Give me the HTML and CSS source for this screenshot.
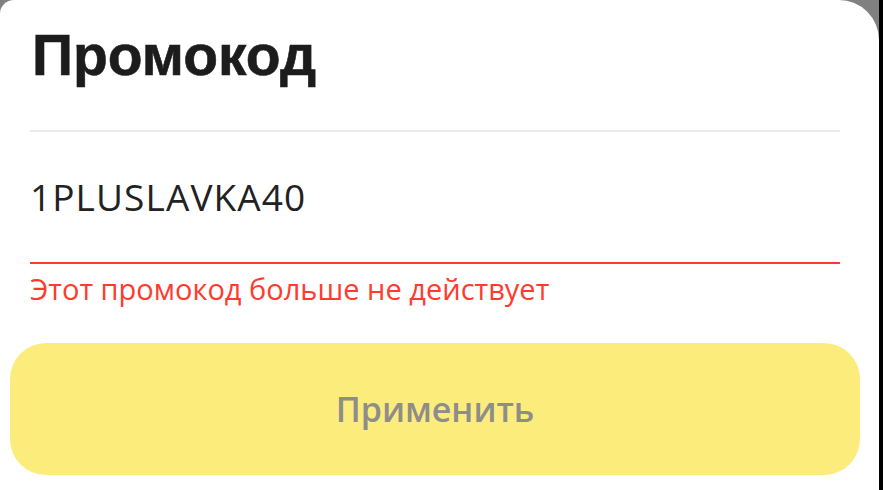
FILE: index.html
```html
<!DOCTYPE html>
<html lang="ru">
<head>
<meta charset="utf-8">
<title>Промокод</title>
<link rel="stylesheet" href="styles.css">
</head>
<body>
<div class="screen">
  <div class="sheet">
    <h1 class="title">Промокод</h1>
    <div class="divider"></div>
    <div class="field">
      <div class="field-value">1PLUSLAVKA40</div>
    </div>
    <div class="error">Этот промокод больше не действует</div>
    <button class="apply" type="button">Применить</button>
  </div>
  <div class="edge"></div>
</div>
</body>
</html>
```

FILE: styles.css
```css
html, body {
  margin: 0;
  padding: 0;
}
body {
  background: #808080;
  font-family: "Open Sans", "Liberation Sans", Arial, sans-serif;
  width: 883px;
  height: 490px;
  overflow: hidden;
}
.screen {
  display: flex;
  height: 490px;
}
.sheet {
  flex: 1;
  background: #ffffff;
  border-radius: 14px 40px 0 0;
  padding: 0 19px 0 10px;
  display: flex;
  flex-direction: column;
}
.edge {
  width: 4px;
  background: #000000;
}
.title {
  margin: 0;
  padding: 22px 20px 0 22px;
  font-family: "Liberation Sans", Arial, sans-serif;
  font-size: 57px;
  line-height: 66px;
  font-weight: 700;
  color: #1c1c1c;
  -webkit-text-stroke: 0.6px #1c1c1c;
}
.divider {
  margin: 42px 20px 0;
  height: 2px;
  background: #ebebeb;
}
.field {
  margin: 0 20px;
  padding-top: 45px;
  height: 132px;
  box-sizing: border-box;
  border-bottom: 2px solid #ff3b2f;
}
.field-value {
  font-size: 37px;
  line-height: 40px;
  color: #222222;
  letter-spacing: 1.1px;
}
.error {
  margin: 10px 20px 0;
  font-size: 29px;
  line-height: 30px;
  color: #ff3b2f;
}
.apply {
  margin-top: 39px;
  height: 132px;
  border: none;
  border-radius: 36px;
  background: #fcec7c;
  color: #8e8d89;
  font-family: "Open Sans", "Liberation Sans", Arial, sans-serif;
  font-size: 34px;
  font-weight: 600;
  padding: 0;
}
```
